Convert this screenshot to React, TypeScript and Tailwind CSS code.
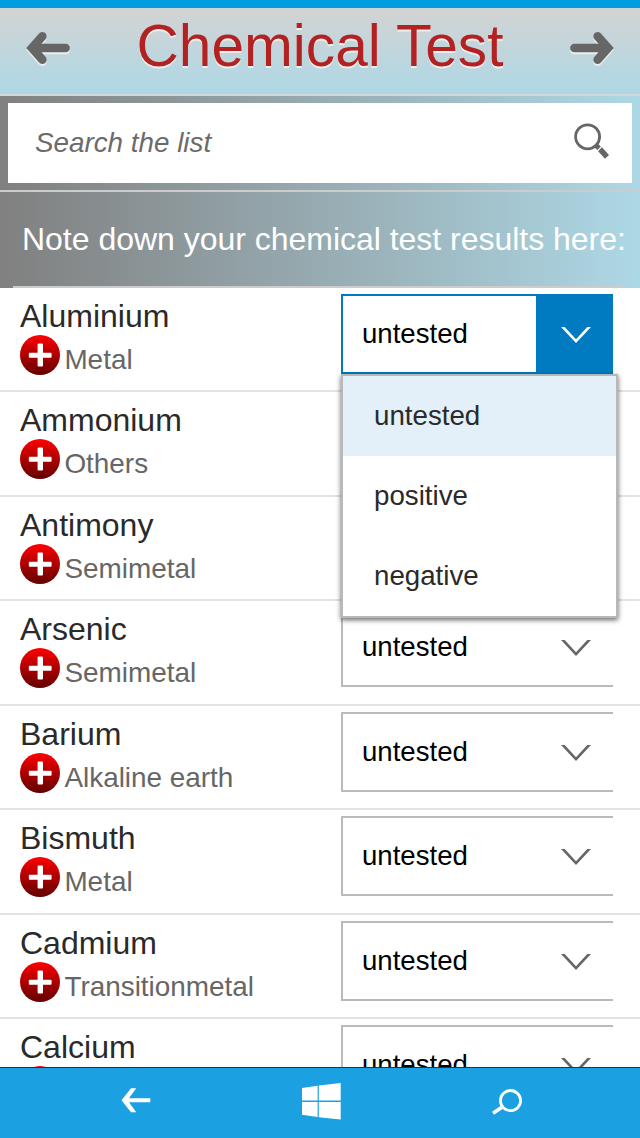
import { useState } from 'react'

const elements = [
  { name: 'Aluminium', group: 'Metal' },
  { name: 'Ammonium', group: 'Others' },
  { name: 'Antimony', group: 'Semimetal' },
  { name: 'Arsenic', group: 'Semimetal' },
  { name: 'Barium', group: 'Alkaline earth' },
  { name: 'Bismuth', group: 'Metal' },
  { name: 'Cadmium', group: 'Transitionmetal' },
  { name: 'Calcium', group: 'Alkaline earth' },
]

const options = ['untested', 'positive', 'negative']

export default function App() {
  const [openRow, setOpenRow] = useState<number | null>(0)
  const [results, setResults] = useState<string[]>(elements.map(() => 'untested'))

  const choose = (row: number, value: string) => {
    setResults(results.map((r, i) => (i === row ? value : r)))
    setOpenRow(null)
  }

  return (
    <div className="flex h-[1138px] w-[640px] flex-col overflow-hidden bg-white font-['Liberation_Sans',Arial,sans-serif]">
      <div className="h-2 shrink-0 bg-[#009de2]" />

      <header className="flex h-[88px] shrink-0 items-start justify-between border-b-2 border-[#d3d9db] bg-linear-to-b from-[#d3d3d3] to-[#add8e6] px-[26px]">
        <button className="mt-6 h-9 w-11" aria-label="Back">
          <HeaderArrow />
        </button>
        <h1 className="mt-[6px] text-[58.6px] leading-[64px] whitespace-nowrap text-[#b22222] [text-shadow:0_2px_0_#eee]">
          Chemical Test
        </h1>
        <button className="mt-6 h-9 w-11 scale-x-[-1]" aria-label="Next">
          <HeaderArrow />
        </button>
      </header>

      <div className="h-24 shrink-0 border-b-2 border-[#ccc] bg-linear-to-r from-[#808080] to-[#add8e6] px-2 pt-[7px]">
        <div className="flex h-20 items-start justify-between bg-white pt-[18px] pr-[22px] pl-[27px]">
          <input
            className="h-11 w-96 text-[27.8px] text-[#666] italic outline-none placeholder:text-[#6b6b6b]"
            placeholder="Search the list"
          />
          <svg className="h-10 w-10" viewBox="0 0 40 40" fill="none" stroke="#666">
            <circle cx="17.6" cy="15.8" r="12" strokeWidth="2.8" />
            <path d="M25.8 24L29.2 27.4" strokeWidth="5" />
            <path d="M29.5 27.7L37 35.9" strokeWidth="5.5" />
            <path d="M31.6 25.6L27.4 30" stroke="#fff" strokeWidth="1.2" />
          </svg>
        </div>
      </div>

      <div className="flex h-24 shrink-0 flex-col bg-linear-to-r from-[#808080] to-[#add8e6] pr-[14px] pl-[13px]">
        <p className="h-[94px] pl-[9px] text-[32px] leading-[94px] tracking-[-0.02px] whitespace-nowrap text-white">
          Note down your chemical test results here:
        </p>
        <div className="h-0.5 bg-[#ccc]" />
      </div>

      <ul className="min-h-0 flex-1">
        {elements.map((el, i) => (
          <li key={el.name} className="flex h-[104.43px] justify-between border-b-2 border-[#e3e3e3] pr-[27px] pl-5">
            <div>
              <h2 className="mt-[9px] text-[32px] leading-[38px] text-[#2a2a2a]">{el.name}</h2>
              <div className="flex gap-1">
                <PlusBadge />
                <span className="mt-[9px] text-[27.9px] leading-[32px] whitespace-nowrap text-[#666]">{el.group}</span>
              </div>
            </div>
            <ResultSelect
              value={results[i]}
              open={openRow === i}
              covered={openRow !== null && i > openRow && i <= openRow + 2}
              onToggle={() => setOpenRow(openRow === i ? null : i)}
              onChoose={(value) => choose(i, value)}
            />
          </li>
        ))}
      </ul>

      <nav className="relative flex h-[71px] shrink-0 border-t border-[#12364a] bg-[#1ba1e2]">
        <div className="flex w-full items-start pl-[121px]">
          <svg className="mt-5 h-[26px] w-[30px]" viewBox="0 0 30 26" fill="#fff">
            <path d="M0.5 12.3L10 0.3H15.2L8 10.3H29.3V14.3H8L15.2 24.3H10Z" />
          </svg>
          <svg className="mt-[15px] ml-[150px] h-[37px] w-10" viewBox="0 0 40 37" fill="#fff">
            <path d="M1 5L16.6 2.8V17.6H1Z" />
            <path d="M17.8 2.6L39.7 0V17.6H17.8Z" />
            <path d="M1 19H16.6V34L1 31.8Z" />
            <path d="M17.8 19H39.7V36.6L17.8 34.2Z" />
          </svg>
          <svg className="mt-5 ml-[150px] h-[28px] w-8" viewBox="0 0 32 28" fill="none" stroke="#fff">
            <circle cx="19.5" cy="12.6" r="10.1" strokeWidth="2.8" />
            <path d="M12 18.5L2 25.3" strokeWidth="3.6" />
          </svg>
        </div>
      </nav>
    </div>
  )
}

function HeaderArrow() {
  return (
    <svg
      className="h-9 w-11 overflow-visible drop-shadow-[0_2px_0_#eee]"
      viewBox="0 0 44 36"
      fill="none"
      stroke="#666"
      strokeWidth="8.6"
      strokeLinecap="round"
    >
      <path d="M8 16H39.6" />
      <path d="M16.3 4.3L6 16L16.3 27.7" />
    </svg>
  )
}

function PlusBadge() {
  return (
    <span className="ml-[0.4px] flex h-10 w-10 items-center justify-center rounded-full bg-linear-to-b from-[#ff0000] to-[#640000]">
      <svg className="h-6 w-6" viewBox="0 0 24 24" fill="#fff">
        <rect x="9.6" y="0.5" width="5.4" height="23" rx="1" />
        <rect x="0.8" y="9.7" width="22.8" height="5" rx="1" />
      </svg>
    </span>
  )
}

type ResultSelectProps = {
  value: string
  open: boolean
  covered: boolean
  onToggle: () => void
  onChoose: (value: string) => void
}

function ResultSelect({ value, open, covered, onToggle, onChoose }: ResultSelectProps) {
  if (covered) return null

  return (
    <div className="relative mt-[6px] h-20 w-[272px]">
      <button
        onClick={onToggle}
        className={
          open
            ? 'flex h-20 w-full border-2 border-r-0 border-[#007ac1] bg-white'
            : 'flex h-20 w-full border-2 border-r-0 border-[#bababa] bg-white'
        }
      >
        <span className="flex-1 pl-[19px] text-left text-[27.6px] leading-[76px] text-black">{value}</span>
        <span
          className={
            open
              ? 'flex h-full w-[77px] items-center justify-center bg-[#007ac1] text-white'
              : 'flex h-full w-[77px] items-center justify-center text-[#666]'
          }
        >
          <svg className="mt-0.5 ml-0.5 h-4 w-[30px]" viewBox="0 0 30 16" fill="currentColor">
            <path d="M0 0H3.7L15 12.2L26.3 0H30L15 16Z" />
          </svg>
        </span>
      </button>
      {open && (
        <ul className="absolute top-20 left-0 z-10 h-[244px] w-[277px] border-2 border-[#b8b8b8] bg-white shadow-[0_2px_5px_rgba(0,0,0,0.6)]">
          {options.map((option) => (
            <li
              key={option}
              onClick={() => onChoose(option)}
              className={
                option === value
                  ? 'h-20 bg-[#e3f0f9] pl-[31px] text-[27.7px] leading-[80px] text-[#2a2a2a]'
                  : 'h-20 pl-[31px] text-[27.7px] leading-[80px] text-[#2a2a2a]'
              }
            >
              {option}
            </li>
          ))}
        </ul>
      )}
    </div>
  )
}
